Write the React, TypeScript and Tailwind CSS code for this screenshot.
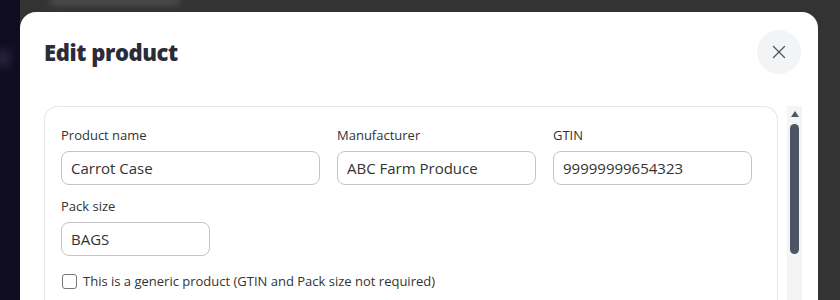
import { X } from 'lucide-react';

function Field({ label, value, width }: { label: string; value: string; width: string }) {
  return (
    <div className={`flex flex-col ${width}`}>
      <label className="text-[13px] leading-[18px] text-[#333]">{label}</label>
      <input
        readOnly
        value={value}
        className="mt-[7px] h-[34px] w-full rounded-[8px] border border-[#c4c4c4] bg-white px-[9px] text-[15px] text-[#333] outline-none"
      />
    </div>
  );
}

export default function App() {
  return (
    <div
      className="flex h-[300px] w-[840px] overflow-hidden bg-[#333333]"
      style={{ fontFamily: '"Open Sans", "Liberation Sans", sans-serif' }}
    >
      <div className="relative w-[20px] shrink-0 bg-[#110d20]">
        <div className="absolute left-[-4px] top-[50px] h-[16px] w-[14px] rounded bg-[#2a2540] blur-[4px]" />
      </div>
      <div className="relative flex flex-1 flex-col pt-[12px] pr-[22px]">
        <div className="absolute left-[30px] top-[-4px] h-[10px] w-[130px] rounded bg-[#4a4a4a] blur-[3px]" />
        <div className="relative flex flex-1 flex-col rounded-t-[16px] bg-white">
          <div className="flex items-center justify-between pt-[18px] pl-[24px] pr-[17px]">
            <h2 className="text-[22px] font-extrabold tracking-[-0.4px] text-[#2b2b3a]">Edit product</h2>
            <button className="flex h-[44px] w-[44px] items-center justify-center rounded-full bg-[#f3f4f6] text-[#4b5563]">
              <X size={22} strokeWidth={1.4} />
            </button>
          </div>
          <div className="mt-[32px] flex flex-1 pl-[24px] pr-[16px]">
            <div className="flex-1 rounded-t-[14px] border border-b-0 border-[#e5e7eb] px-[16px] pt-[19px]">
              <div className="flex gap-[17px]">
                <Field label="Product name" value="Carrot Case" width="w-[259px]" />
                <Field label="Manufacturer" value="ABC Farm Produce" width="w-[199px]" />
                <Field label="GTIN" value="99999999654323" width="w-[199px]" />
              </div>
              <div className="mt-[12px]">
                <Field label="Pack size" value="BAGS" width="w-[149px]" />
              </div>
              <div className="mt-[16px] flex items-center gap-[6px]">
                <span className="ml-[1px] h-[15px] w-[15px] rounded-[3px] border border-[#777]" />
                <span className="text-[13px] leading-[18px] text-[#333]">
                  This is a generic product (GTIN and Pack size not required)
                </span>
              </div>
            </div>
            <div className="ml-[9px] flex w-[15px] flex-col items-center bg-[#f3f4f6]">
              <svg width="8" height="6" viewBox="0 0 8 6" className="mt-[5px]">
                <path d="M4 0 L8 6 L0 6 Z" fill="#4b5563" />
              </svg>
              <div className="mt-[7px] h-[130px] w-[9px] rounded-full bg-[#4b5563]" />
            </div>
          </div>
        </div>
      </div>
    </div>
  );
}
